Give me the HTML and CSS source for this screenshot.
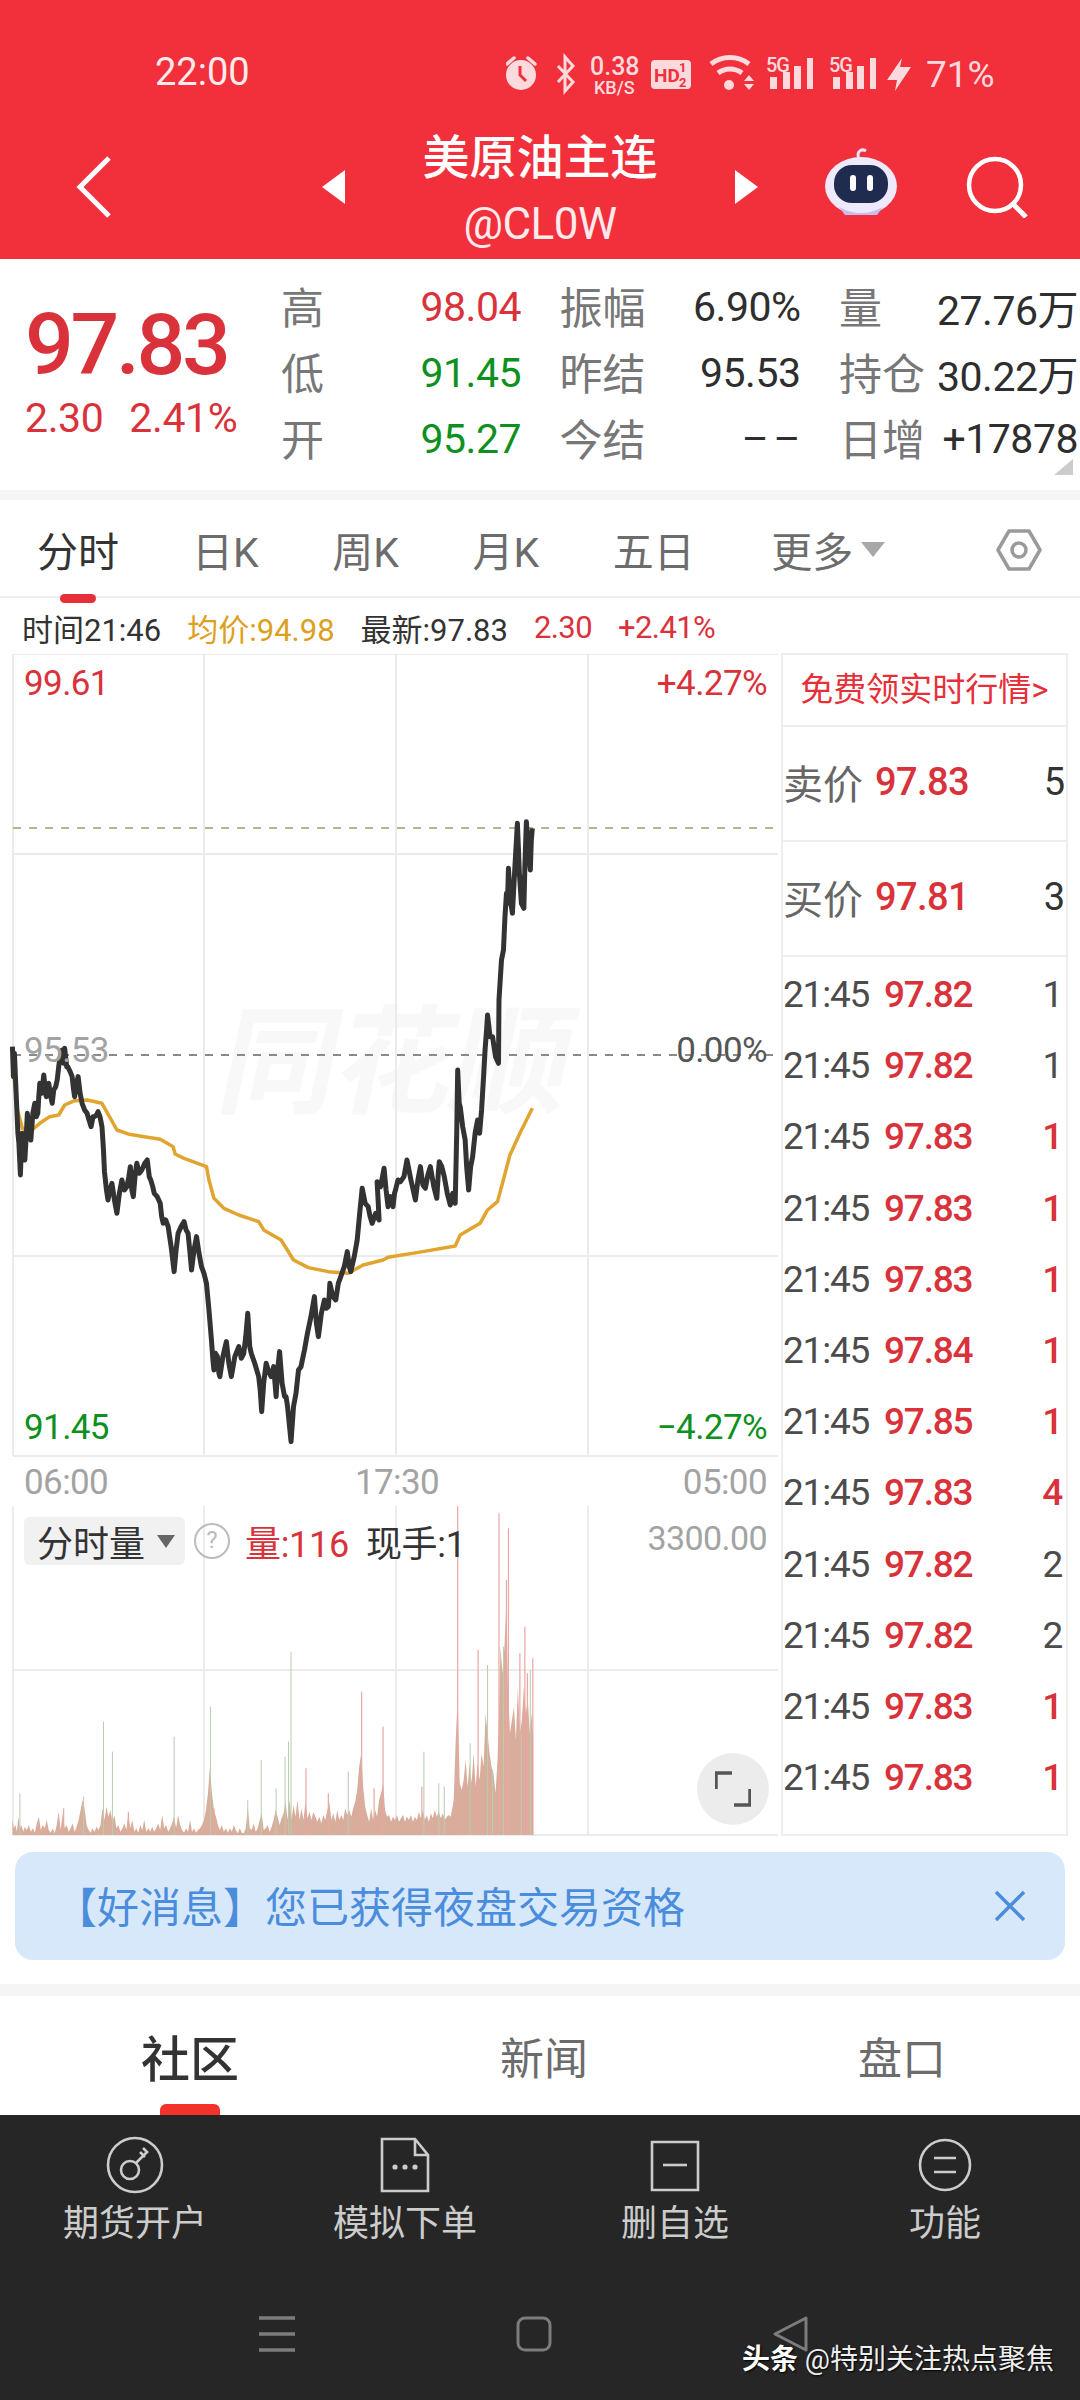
FILE: index.html
```html
<!DOCTYPE html>
<html lang="zh-CN">
<head>
<meta charset="utf-8">
<title>美原油主连</title>
<link rel="stylesheet" href="styles.css">
</head>
<body>
<div class="page">
  <header class="header">
    <div class="status">
      <span class="clock">22:00</span>
      <svg class="status-icons" width="405" height="46" viewBox="506 52 405 46">
        <g fill="#fcd9dc" stroke="none">
          <circle cx="521" cy="75" r="15"/>
          <path d="M507 64l7-6M535 64l-7-6" stroke="#fcd9dc" stroke-width="3.5" stroke-linecap="round"/>
          <path d="M520 66v9l6 6" stroke="#f1303c" stroke-width="3" fill="none"/>
          <path d="M558 66l15 16-8 9V57l8 9-15 16" fill="none" stroke="#fcd9dc" stroke-width="3"/>
          <text class="st-big" x="590" y="75">0.38</text>
          <text class="st-small" x="594" y="94">KB/S</text>
          <rect x="651" y="60" width="40" height="29" rx="4"/>
          <text class="st-hd" x="654" y="82">HD</text>
          <text class="st-frac" x="679" y="72">1</text>
          <text class="st-frac" x="679" y="87">2</text>
          <path d="M711 64a31 31 0 0 1 38 0" fill="none" stroke="#fcd9dc" stroke-width="5"/>
          <path d="M718 73a20 20 0 0 1 24 0" fill="none" stroke="#fcd9dc" stroke-width="5"/>
          <circle cx="729" cy="85" r="5"/>
          <path d="M744 81l5-6 5 6zM744 84l5 6 5-6z"/>
          <text class="st-5g" x="766" y="72">5G</text>
          <rect x="770" y="77" width="7" height="12"/><rect x="783" y="72" width="7" height="17"/>
          <rect x="794" y="66" width="7" height="23"/><rect x="807" y="58" width="6" height="31"/>
          <text class="st-5g" x="829" y="72">5G</text>
          <rect x="833" y="77" width="7" height="12"/><rect x="846" y="72" width="7" height="17"/>
          <rect x="857" y="66" width="7" height="23"/><rect x="870" y="58" width="6" height="31"/>
          <path d="M902 58l-15 22h10l-2 11 16-24h-11z"/>
        </g>
      </svg>
      <span class="battery">71%</span>
    </div>
    <div class="nav">
      <svg class="back" width="36" height="62" viewBox="0 0 36 62"><path d="M33 2L4 31l29 29" fill="none" stroke="#fff" stroke-width="5"/></svg>
      <svg class="tri-l" width="23" height="34" viewBox="0 0 23 34"><path d="M23 0v34L0 17z" fill="#fff"/></svg>
      <div class="title">
        <div class="title-name">美原油主连</div>
        <div class="title-code">@CL0W</div>
      </div>
      <svg class="tri-r" width="23" height="34" viewBox="0 0 23 34"><path d="M0 0v34l23-17z" fill="#fff"/></svg>
      <svg class="robot" width="72" height="70" viewBox="0 0 72 70">
        <path d="M34 14c-3-7 2-11 7-8" fill="none" stroke="#e9e3fb" stroke-width="3"/>
        <ellipse cx="36" cy="41" rx="36" ry="29" fill="#eeeafc"/>
        <path d="M14 62q22 12 44 0l-6 8H20z" fill="#c9bdf0"/>
        <rect x="9" y="20" width="54" height="38" rx="18" fill="#1f2c4f"/>
        <rect x="25" y="30" width="6" height="16" rx="3" fill="#fff"/>
        <rect x="42" y="30" width="6" height="16" rx="3" fill="#fff"/>
      </svg>
      <svg class="search" width="62" height="62" viewBox="0 0 62 62">
        <circle cx="29" cy="29" r="26" fill="none" stroke="#fff" stroke-width="4.5"/>
        <path d="M47 48l13 13" stroke="#fff" stroke-width="5"/>
      </svg>
    </div>
  </header>

  <section class="quote">
    <div class="quote-main">
      <div class="last">97.83</div>
      <div class="change"><span>2.30</span><span>2.41%</span></div>
    </div>
    <div class="quote-grid">
      <div class="cell"><span class="lab">高</span><span class="num up">98.04</span></div>
      <div class="cell"><span class="lab">振幅</span><span class="num val">6.90%</span></div>
      <div class="cell"><span class="lab">量</span><span class="num val">27.76万</span></div>
      <div class="cell"><span class="lab">低</span><span class="num down">91.45</span></div>
      <div class="cell"><span class="lab">昨结</span><span class="num val">95.53</span></div>
      <div class="cell"><span class="lab">持仓</span><span class="num val">30.22万</span></div>
      <div class="cell"><span class="lab">开</span><span class="num down">95.27</span></div>
      <div class="cell"><span class="lab">今结</span><span class="num val val-none">––</span></div>
      <div class="cell"><span class="lab">日增</span><span class="num val">+17878</span></div>
    </div>
    <span class="fold"></span>
  </section>

  <nav class="tabs">
    <span class="tab tab-on">分时</span>
    <span class="tab">日K</span>
    <span class="tab">周K</span>
    <span class="tab">月K</span>
    <span class="tab">五日</span>
    <span class="tab tab-more">更多<i class="caret"></i></span>
    <svg class="hex" width="48" height="48" viewBox="0 0 48 48">
      <path d="M14 5h20l11 19-11 19H14L3 24z" fill="none" stroke="#9a9a9a" stroke-width="3.5" stroke-linejoin="round"/>
      <circle cx="24" cy="24" r="7" fill="none" stroke="#9a9a9a" stroke-width="3.5"/>
    </svg>
  </nav>

  <div class="tick-info">
    <span class="dark">时间21:46</span>
    <span class="gold">均价:94.98</span>
    <span class="dark">最新:97.83</span>
    <span class="red">2.30</span>
    <span class="red">+2.41%</span>
  </div>

  <main class="board">
    <div class="charts">
      <svg class="price-chart" width="781" height="852" viewBox="0 654 781 852">
        <text class="watermark" x="0" y="0" transform="translate(214 1104) skewX(-12)" textLength="350">同花顺</text>
        <path class="grid" d="M13 654H778M13 854H778M13 1256H778M13 1456H778M13 654V1456M204 654V1456M396 654V1456M588 654V1456"/>
        <path class="dash-top" d="M13 828H778"/>
        <path class="dash-mid" d="M13 1055H778"/>
        <g transform="translate(0 1000) scale(.4975 .3333)">
          <polyline class="avg" points="27,210 35,330 45,385 60,395 80,370 100,350 118,345 130,315 150,302 175,300 205,310 220,350 235,390 260,403 290,410 322,418 348,440 352,462 370,475 415,500 420,540 430,595 450,625 480,645 520,665 530,690 565,720 590,780 620,803 660,815 700,820 730,795 770,780 780,772 850,755 915,738 925,705 965,670 980,630 1000,605 1010,550 1025,465 1045,400 1070,325"/>
          <polyline class="line" points="25,140 27,230 29,160 33,300 36,400 38,430 41,525 43,440 45,400 48,470 50,480 53,400 55,340 58,400 62,420 66,340 70,310 73,350 76,340 78,290 80,250 84,280 88,225 91,270 93,290 96,260 98,250 102,290 105,310 108,270 112,260 115,240 118,200 121,170 125,150 128,190 130,145 134,200 136,200 141,215 145,230 148,270 150,290 154,250 157,230 161,280 165,310 170,330 175,340 179,360 183,380 187,350 190,350 194,345 197,335 201,350 205,380 208,450 210,515 214,570 217,600 221,570 225,550 230,600 235,640 240,580 245,540 250,570 255,560 259,530 262,500 265,570 268,590 272,520 275,490 280,520 285,510 291,490 296,480 300,530 303,540 307,560 310,580 316,590 322,610 325,650 328,670 333,660 338,680 344,740 350,815 354,750 358,700 364,680 370,665 374,690 378,700 382,760 385,810 390,750 395,710 400,760 405,800 410,820 415,850 420,930 425,1020 428,1080 430,1110 433,1060 437,1070 440,1120 442,1130 448,1070 455,1025 460,1090 465,1130 472,1070 480,1040 485,1075 490,1060 494,1010 498,940 502,1040 505,1060 512,1090 520,1130 523,1170 526,1235 530,1150 535,1090 540,1115 545,1130 550,1100 555,1190 558,1110 562,1055 567,1150 572,1190 575,1190 578,1220 582,1280 585,1325 590,1220 595,1180 600,1110 605,1100 612,1050 618,1000 625,950 632,890 636,970 640,1010 646,940 652,900 656,925 660,920 662,880 663,850 669,890 675,900 680,850 685,830 692,800 698,755 702,800 705,815 712,770 718,720 723,640 728,565 734,610 740,620 744,650 748,670 755,640 762,660 760,600 758,545 765,560 772,505 776,570 780,620 785,590 790,620 793,580 795,570 800,540 805,545 812,530 818,480 826,540 835,600 840,540 845,500 850,555 855,565 860,525 865,500 872,560 878,595 881,520 883,485 888,500 893,530 899,580 905,615 910,580 915,610 918,400 920,210 923,310 925,320 930,380 935,420 938,500 942,570 946,500 950,470 955,400 960,360 964,400 968,330 972,230 975,150 978,90 980,45 985,110 990,110 996,170 1002,190 1003,0 1008,-120 1012,-150 1015,-250 1018,-320 1020,-290 1022,-395 1026,-300 1030,-260 1035,-400 1040,-530 1044,-380 1048,-290 1053,-275 1055,-400 1058,-535 1062,-450 1066,-390 1068,-480 1070,-515"/>
        </g>
        <text class="lbl up-fill" x="24" y="695">99.61</text>
        <text class="lbl up-fill end" x="767" y="695">+4.27%</text>
        <text class="lbl grey-fill" x="24" y="1062">95.53</text>
        <text class="lbl mid-fill end" x="767" y="1062">0.00%</text>
        <text class="lbl down-fill" x="24" y="1439">91.45</text>
        <text class="lbl down-fill end" x="767" y="1439">−4.27%</text>
        <text class="lbl grey-fill" x="24" y="1494">06:00</text>
        <text class="lbl grey-fill mid" x="397" y="1494">17:30</text>
        <text class="lbl grey-fill end" x="767" y="1494">05:00</text>
      </svg>
      <div class="volume">
        <svg class="vol-chart" width="781" height="332" viewBox="0 1506 781 332">
          <path class="grid-thin" d="M13 1505H778M13 1670H778M13 1835H778M13 1505V1835M204 1505V1835M396 1505V1835M588 1505V1835"/>
          <g transform="translate(0 1500) scale(.4975 .3333)">
            <path class="vol-base" d="M25 1005V960L28 985 31 975 34 995 37 950 40 985 43 975 47 995 50 980 54 990 58 975 62 995 66 985 70 998 74 970 78 950 82 990 86 975 90 985 94 960 98 990 102 998 106 985 110 1000 114 975 118 935 122 990 126 940 130 985 134 975 138 995 142 985 146 970 150 995 154 980 158 960 162 930 166 900 170 925 174 975 178 990 182 998 186 985 190 995 194 980 198 990 202 975 206 925 210 960 214 920 218 950 222 930 226 965 230 945 234 985 238 975 242 995 246 985 250 970 254 990 258 940 262 985 266 960 270 995 274 985 278 998 282 975 286 990 290 960 294 995 298 985 302 995 306 980 310 995 314 985 318 970 322 990 326 945 330 985 334 975 338 995 342 985 346 970 350 950 354 985 358 945 362 975 366 990 370 998 374 985 378 995 382 960 386 995 390 985 394 998 398 990 402 985 406 975 410 960 414 930 418 880 422 800 426 880 430 930 434 950 438 975 442 990 446 975 450 995 454 985 458 998 462 985 466 995 470 975 474 990 478 1000 482 985 486 998 490 1000 494 985 498 920 502 985 506 990 510 970 514 995 518 985 522 960 526 940 530 990 534 985 538 975 542 995 546 980 550 960 554 930 558 950 562 975 566 955 570 940 574 905 578 960 582 900 586 960 590 915 594 950 598 900 602 960 606 925 610 960 614 905 618 955 622 935 626 960 630 935 634 950 638 965 642 950 646 970 650 945 654 960 658 930 662 905 666 960 670 940 674 965 678 930 682 960 686 945 690 960 694 925 698 945 702 930 706 950 710 925 714 905 718 870 722 800 726 760 730 860 734 920 738 945 742 965 746 925 750 960 754 930 758 950 762 900 766 880 770 850 774 930 778 950 782 945 786 965 790 950 794 960 798 945 802 965 806 955 810 945 814 965 818 950 822 960 826 945 830 965 834 950 838 960 842 935 846 955 850 930 854 960 858 945 862 965 866 940 870 955 874 930 878 950 882 935 886 955 890 940 894 960 898 950 902 945 906 950 912 900 916 720 920 590 924 850 928 870 932 840 936 780 940 860 944 790 948 850 952 760 956 860 960 790 964 840 968 760 972 800 976 640 980 700 984 760 988 800 992 820 996 880 1000 780 1003 640 1006 440 1010 520 1014 440 1018 300 1021 560 1025 700 1029 660 1033 620 1037 720 1041 560 1045 700 1049 660 1053 560 1057 640 1061 600 1065 700 1069 640 1072 720V1005Z"/>
            <path class="vol-spike-g" d="M40 1005V880M168 1005V890M208 1005V665M226 1005V755M350 1005V710M423 1005V620M498 1005V900M525 1005V780M555 1005V865M573 1005V770M580 1005V725M585 1005V455M700 1005V815M852 1005V755M882 1005V850M893 1005V860M945 1005V730M980 1005V495M990 1005V810M1012 1005V440M1048 1005V700M1066 1005V510"/>
            <path class="vol-spike-r" d="M128 1005V925M258 1005V935M430 1005V925M615 1005V805M660 1005V880M727 1005V575M752 1005V865M770 1005V680M848 1005V860M920 1005V15M961 1005V450M1003 1005V40M1018 1005V240M1022 1005V85M1045 1005V460M1055 1005V380M1060 1005V520M1071 1005V475"/>
          </g>
        </svg>
        <div class="vol-bar">
          <span class="chip">分时量<i class="caret caret-dark"></i></span>
          <span class="help">?</span>
          <span class="red vol-num">量:116</span>
          <span class="dark vol-now">现手:1</span>
        </div>
        <span class="vol-max">3300.00</span>
        <span class="expand">
          <svg width="36" height="36" viewBox="0 0 36 36"><path d="M1 18V2h16M35 18v16H19" fill="none" stroke="#555" stroke-width="3.5"/></svg>
        </span>
      </div>
    </div>

    <aside class="trades">
      <div class="free">免费领实时行情&gt;</div>
      <div class="book"><span class="lab-b">卖价</span><span class="red price-b">97.83</span><span class="qty-b">5</span></div>
      <div class="book"><span class="lab-b">买价</span><span class="red price-b">97.81</span><span class="qty-b">3</span></div>
      <div class="list">
        <div class="row"><span class="t">21:45</span><span class="p">97.82</span><span class="q">1</span></div>
        <div class="row"><span class="t">21:45</span><span class="p">97.82</span><span class="q">1</span></div>
        <div class="row"><span class="t">21:45</span><span class="p">97.83</span><span class="q q-up">1</span></div>
        <div class="row"><span class="t">21:45</span><span class="p">97.83</span><span class="q q-up">1</span></div>
        <div class="row"><span class="t">21:45</span><span class="p">97.83</span><span class="q q-up">1</span></div>
        <div class="row"><span class="t">21:45</span><span class="p">97.84</span><span class="q q-up">1</span></div>
        <div class="row"><span class="t">21:45</span><span class="p">97.85</span><span class="q q-up">1</span></div>
        <div class="row"><span class="t">21:45</span><span class="p">97.83</span><span class="q q-up">4</span></div>
        <div class="row"><span class="t">21:45</span><span class="p">97.82</span><span class="q">2</span></div>
        <div class="row"><span class="t">21:45</span><span class="p">97.82</span><span class="q">2</span></div>
        <div class="row"><span class="t">21:45</span><span class="p">97.83</span><span class="q q-up">1</span></div>
        <div class="row"><span class="t">21:45</span><span class="p">97.83</span><span class="q q-up">1</span></div>
        <div class="row"><span class="t">21:45</span><span class="p">97.83</span><span class="q q-up">1</span></div>
      </div>
    </aside>
  </main>

  <div class="notice">
    <span class="notice-text">【好消息】您已获得夜盘交易资格</span>
    <svg width="32" height="32" viewBox="0 0 32 32"><path d="M2 2l28 28M30 2L2 30" stroke="#4a8ddc" stroke-width="3.5"/></svg>
  </div>

  <nav class="sections">
    <span class="sec sec-on">社区</span>
    <span class="sec">新闻</span>
    <span class="sec sec-last">盘口</span>
  </nav>

  <footer class="dock">
    <div class="actions">
      <div class="action">
        <svg width="58" height="58" viewBox="0 0 58 58"><circle cx="29" cy="29" r="27" fill="none" stroke="#ccc" stroke-width="2.6"/><circle cx="24" cy="34" r="9" fill="none" stroke="#ccc" stroke-width="2.6"/><path d="M30 27l11-11M34 16l5 5M37 12l5 5" stroke="#ccc" stroke-width="2.6" fill="none"/></svg>
        <span>期货开户</span>
      </div>
      <div class="action">
        <svg width="58" height="58" viewBox="0 0 58 58"><path d="M6 3h33l13 16v36H6zM39 3v16h13" fill="none" stroke="#ccc" stroke-width="2.6"/><circle cx="19" cy="31" r="2.6" fill="#ccc"/><circle cx="29" cy="31" r="2.6" fill="#ccc"/><circle cx="39" cy="31" r="2.6" fill="#ccc"/></svg>
        <span>模拟下单</span>
      </div>
      <div class="action">
        <svg width="58" height="58" viewBox="0 0 58 58"><path d="M6 6h46v48H6z" fill="none" stroke="#ccc" stroke-width="2.6"/><path d="M17 29h24" stroke="#ccc" stroke-width="2.6"/></svg>
        <span>删自选</span>
      </div>
      <div class="action">
        <svg width="58" height="58" viewBox="0 0 58 58"><circle cx="29" cy="29" r="25" fill="none" stroke="#ccc" stroke-width="2.6"/><path d="M18 22h22M18 36h22" stroke="#ccc" stroke-width="2.6"/></svg>
        <span>功能</span>
      </div>
    </div>
    <div class="sysnav">
      <svg width="36" height="36" viewBox="0 0 36 36"><path d="M0 2h36M0 18h36M0 34h36" stroke="#7c7c7c" stroke-width="3.5"/></svg>
      <svg width="36" height="36" viewBox="0 0 36 36"><rect x="2" y="2" width="32" height="32" rx="7" fill="none" stroke="#7c7c7c" stroke-width="3"/></svg>
      <svg width="36" height="36" viewBox="0 0 36 36"><path d="M33 2v32L2 18z" fill="none" stroke="#7c7c7c" stroke-width="3" stroke-linejoin="round"/></svg>
    </div>
    <div class="credit"><b>头条</b> @特别关注热点聚焦</div>
  </footer>
</div>
</body>
</html>
```

FILE: styles.css
```css
* { box-sizing: border-box; }
html, body { margin: 0; padding: 0; background: #fff; }
body { font-family: Roboto, "Noto Sans CJK SC", sans-serif; }
.page { width: 1080px; height: 2400px; overflow: hidden; position: relative; background: #fff; }

/* header */
.header { height: 259px; background: #f1303c; color: #fff; }
.status { height: 114px; padding: 52px 0 0 155px; display: flex; align-items: flex-start; }
.clock { font-size: 38px; line-height: 40px; color: #fdeaec; width: 351px; }
.status-icons { display: block; flex: none; }
.battery { font-size: 37px; line-height: 40px; margin-left: 15px; color: #fcd9dc; margin-top: 3px; }
.st-big { font: 500 25px Roboto, sans-serif; }
.st-small { font: 500 18px Roboto, sans-serif; }
.st-hd { font: 700 19px Roboto, sans-serif; fill: #f1303c; }
.st-frac { font: 700 13px Roboto, sans-serif; fill: #f1303c; }
.st-5g { font: 500 20px Roboto, sans-serif; letter-spacing: -1px; }
.nav { height: 145px; display: flex; align-items: center; padding-left: 76px; }
.back { flex: none; margin-right: 210px; }
.tri-l, .tri-r { flex: none; }
.title { width: 390px; align-self: flex-start; padding-top: 15px; text-align: center; }
.title-name { font-size: 47px; line-height: 58px; font-weight: 500; }
.title-code { font-size: 44px; line-height: 50px; margin-top: 12px; color: #fdeaec; letter-spacing: -.5px; }
.robot { flex: none; margin-left: 67px; margin-top: -14px; }
.search { flex: none; margin-left: 69px; }

/* quote */
.quote { height: 231px; display: flex; position: relative; }
.quote-main { width: 281px; padding: 41px 0 0 25px; flex: none; }
.last { font-size: 86px; line-height: 90px; font-weight: 500; color: #d9323b; letter-spacing: -3.4px; }
.change { display: flex; gap: 26px; font-size: 41px; line-height: 56px; color: #d9323b; letter-spacing: -.4px; }
.quote-grid { display: grid; grid-template-columns: 240px 241px 239px; column-gap: 38.5px; grid-auto-rows: 66px; padding-top: 13px; }
.cell { display: flex; justify-content: space-between; align-items: center; white-space: nowrap; }
.lab { font-size: 43px; color: #777; }
.num { font-size: 41px; letter-spacing: -.5px; padding-top: 3px; }
.val { color: #2e2e2e; }
.val-none { letter-spacing: 5px; margin-right: -5px; }
.up { color: #d9323b; }
.down { color: #0d9020; }
.fold { position: absolute; left: 1054px; top: 200px; width: 0; height: 0; border-left: 19px solid transparent; border-bottom: 16px solid #ccc; }

/* period tabs */
.tabs { margin-top: 10px; height: 98px; border-bottom: 2px solid #eee; display: flex; align-items: center; padding: 2px 0 0 37px; gap: 73.5px; position: relative; box-shadow: 0 -10px 0 #f5f5f5; }
.tab { font-size: 41px; color: #6c6c6c; position: relative; white-space: nowrap; display: flex; align-items: center; }
.tab-on { color: #333; width: 81.5px; }
.tab-on::after { content: ""; position: absolute; left: 23px; bottom: -24px; width: 36px; height: 9px; border-radius: 5px; background: #e5303a; }
.tab-more { gap: 8px; margin-left: 3px; }
.caret { display: inline-block; width: 0; height: 0; border-left: 12px solid transparent; border-right: 12px solid transparent; border-top: 15px solid #a8a8a8; }
.hex { position: absolute; left: 995px; top: 26px; }

.tick-info { height: 56px; display: flex; align-items: center; gap: 26px; padding: 2px 0 0 22px; font-size: 31px; white-space: nowrap; }
.tick-info .red { letter-spacing: -.6px; }
.dark { color: #333; }
.gold { color: #dca021; }
.red { color: #d9323b; }

/* board */
.board { display: flex; height: 1182px; }
.charts { width: 781px; flex: none; }
.price-chart, .vol-chart { display: block; }
.grid { fill: none; stroke: #ebebeb; stroke-width: 2; }
.grid-thin { fill: none; stroke: #e6e6e6; stroke-width: 1.5; }
.dash-top { stroke: #b9b28f; stroke-width: 2; stroke-dasharray: 8 8; }
.dash-mid { stroke: #8a8a8a; stroke-width: 2; stroke-dasharray: 8 8; }
.line { fill: none; stroke: #333; stroke-width: 5; stroke-linejoin: round; vector-effect: non-scaling-stroke; }
.avg { fill: none; stroke: #e0a42f; stroke-width: 3.5; stroke-linejoin: round; vector-effect: non-scaling-stroke; }
.watermark { font: 700 118px "Noto Sans CJK SC", sans-serif; fill: #f8f8f8; }
.lbl { font: 400 35px Roboto, sans-serif; letter-spacing: -.6px; }
.end { text-anchor: end; }
.mid { text-anchor: middle; }
.up-fill { fill: #d9323b; }
.down-fill { fill: #0d9020; }
.grey-fill { fill: #a3a3a3; }
.mid-fill { fill: #555; }
.vol-base { fill: #d9ad9b; }
.vol-spike-g { fill: none; stroke: #b7cdb0; stroke-width: 1; vector-effect: non-scaling-stroke; }
.vol-spike-r { fill: none; stroke: #e8a7a3; stroke-width: 1.2; vector-effect: non-scaling-stroke; }
.volume { position: relative; height: 332px; }
.vol-bar { position: absolute; left: 24px; top: 11px; display: flex; align-items: center; font-size: 36px; height: 48px; white-space: nowrap; }
.chip { width: 161px; height: 48px; background: #f1f1f1; border-radius: 6px; display: flex; align-items: center; padding-left: 13px; gap: 12px; color: #333; }
.caret-dark { border-left-width: 9px; border-right-width: 9px; border-top: 13px solid #666; }
.help { width: 36px; height: 36px; margin-left: 9px; border: 2.5px solid #bbb; border-radius: 50%; font-size: 24px; line-height: 31px; text-align: center; color: #bbb; }
.vol-num { margin-left: 15px; letter-spacing: -.3px; }
.vol-now { margin-left: 17px; letter-spacing: -.3px; }
.vol-max { position: absolute; right: 14px; top: 12px; font-size: 34px; line-height: 40px; color: #a3a3a3; letter-spacing: -.6px; }
.expand { position: absolute; left: 697px; top: 247px; width: 72px; height: 72px; border-radius: 50%; background: #ececec; display: flex; align-items: center; justify-content: center; }

/* trades panel */
.trades { width: 287px; height: 1183px; flex: none; overflow: hidden; border: 2px solid #eee; margin-top: -1px; }
.free { height: 72px; border-bottom: 2px solid #eee; font-size: 33px; line-height: 70px; text-align: center; color: #e5303a; white-space: nowrap; }
.book { height: 115px; border-bottom: 2px solid #eee; display: flex; align-items: center; padding-bottom: 4px; }
.lab-b { font-size: 40px; color: #666; width: 92px; }
.price-b { font-size: 38px; font-weight: 500; letter-spacing: -.6px; }
.qty-b { margin-left: auto; font-size: 38px; color: #333; padding-right: 1px; }
.list { padding-top: 2px; }
.row { height: 71.2px; display: flex; align-items: center; font-size: 37px; letter-spacing: -1.2px; }
.t { color: #4c4c4c; width: 101px; }
.p { color: #d9323b; font-weight: 500; }
.q { margin-left: auto; color: #4c4c4c; padding-right: 4px; }
.q-up { color: #d9323b; font-weight: 500; }

/* notice */
.notice { margin: 16px 15px 0; height: 108px; background: #d8e8fb; border-radius: 18px; display: flex; align-items: center; justify-content: space-between; padding: 0 39px 0 40px; }
.notice-text { font-size: 42px; color: #4a8ddc; white-space: nowrap; margin-top: -4px; }

/* section tabs */
.sections { margin-top: 24px; height: 131px; border-top: 12px solid #f5f5f5; display: grid; grid-template-columns: 380px 328px 372px; align-items: center; text-align: center; position: relative; }
.sec { font-size: 44px; color: #6c6c6c; }
.sec-last { padding-left: 16px; }
.sec-on { font-size: 49px; color: #333; font-weight: 500; }
.sec-on::after { content: ""; position: absolute; left: 160px; bottom: 0; width: 60px; height: 11px; border-radius: 6px 6px 0 0; background: #f3322c; }

/* dock */
.dock { height: 285px; background: #262626; position: relative; }
.actions { display: flex; padding-top: 21px; }
.action { width: 270px; display: flex; flex-direction: column; align-items: center; color: #ccc; font-size: 36px; line-height: 44px; gap: 8px; }
.sysnav { position: absolute; left: 259px; top: 201px; width: 550px; display: flex; justify-content: space-between; }
.credit { position: absolute; right: 26px; top: 228px; font-size: 28px; line-height: 34px; color: #eee; white-space: nowrap; text-shadow: 1px 1px 2px #000; }
.credit b { color: #fff; }
```
